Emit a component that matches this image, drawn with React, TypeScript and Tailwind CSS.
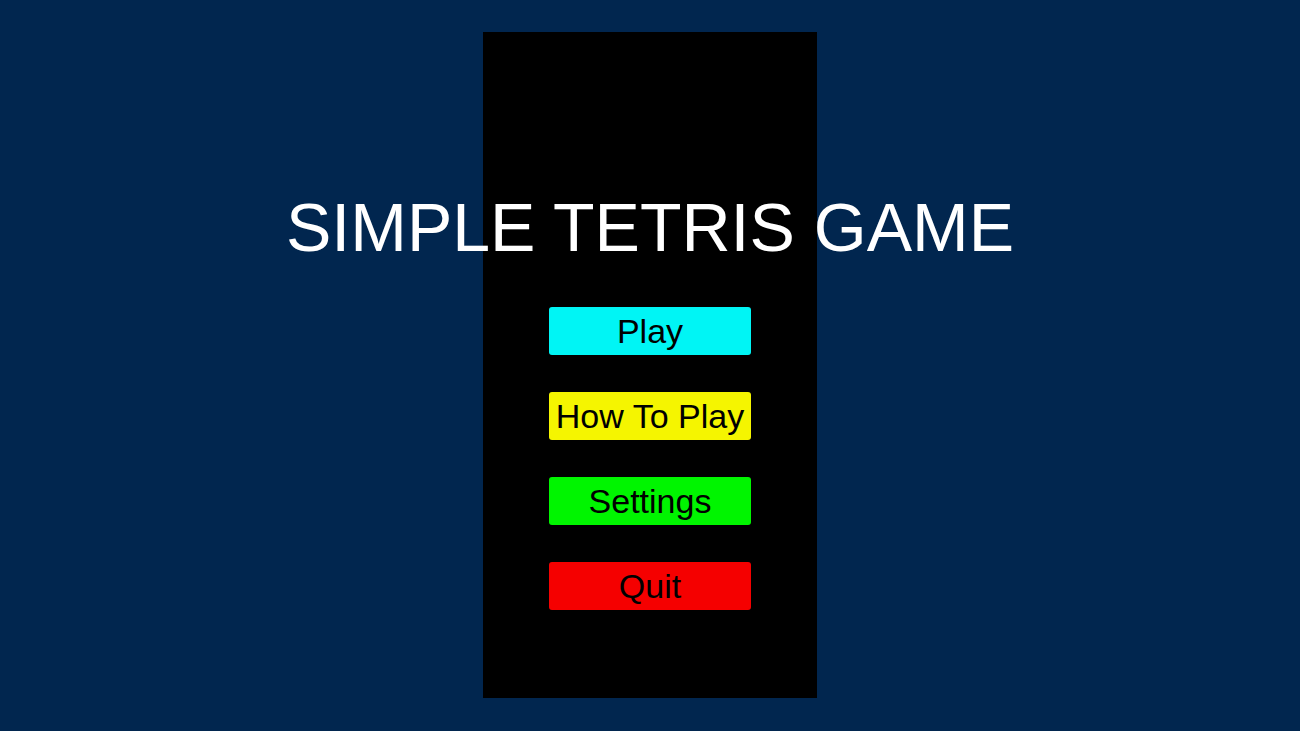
import React from "react";

const buttons = [
  { label: "Play", cls: "bg-[#00f5f5]" },
  { label: "How To Play", cls: "bg-[#f5f500]" },
  { label: "Settings", cls: "bg-[#00f500]" },
  { label: "Quit", cls: "bg-[#f50000]" },
];

export default function App() {
  return (
    <div
      className="relative h-[731px] w-full overflow-hidden bg-[#01264f]"
      style={{ fontFamily: '"Liberation Sans", Arial, sans-serif' }}
    >
      <div className="mx-auto mt-[32px] flex h-[666px] w-[334px] flex-col items-center gap-[37px] bg-black pt-[275px]">
        {buttons.map((b) => (
          <button
            key={b.label}
            className={`flex h-[48px] w-[202px] items-center justify-center rounded-[3px] text-[34px] leading-none text-black ${b.cls}`}
          >
            {b.label}
          </button>
        ))}
      </div>
      <div className="pointer-events-none absolute left-0 right-0 top-[193px] flex justify-center">
        <h1 className="text-[68px] leading-none text-white">SIMPLE TETRIS GAME</h1>
      </div>
    </div>
  );
}
